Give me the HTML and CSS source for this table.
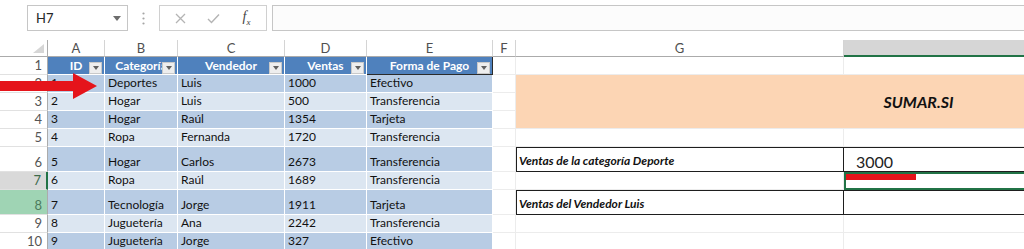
FILE: index.html
```html
<!DOCTYPE html>
<html lang="es">
<head>
<meta charset="utf-8">
<title>SUMAR.SI</title>
<link rel="stylesheet" href="styles.css">
</head>
<body>
<div class="app">
  <div class="formula-bar">
    <div class="name-box"><span>H7</span><svg class="caret" width="8" height="5" viewBox="0 0 8 5"><path d="M0 0H8L4 5Z" fill="#6d6d6d"/></svg></div>
    <div class="dots"><svg width="3" height="13" viewBox="0 0 3 13"><circle cx="1.5" cy="1.5" r="1.1" fill="#a5a5a5"/><circle cx="1.5" cy="6.5" r="1.1" fill="#a5a5a5"/><circle cx="1.5" cy="11.5" r="1.1" fill="#a5a5a5"/></svg></div>
    <div class="fn-box">
      <span class="slot"><svg width="11" height="11" viewBox="0 0 11 11"><path d="M1 1L10 10M10 1L1 10" stroke="#b4b4b4" stroke-width="1.3" fill="none"/></svg></span>
      <span class="slot"><svg width="13" height="11" viewBox="0 0 13 11"><path d="M1 6L4.5 9.5L12 1.5" stroke="#b4b4b4" stroke-width="1.4" fill="none"/></svg></span>
      <span class="slot fx"><i>f<sub>x</sub></i></span>
    </div>
    <div class="formula-input"></div>
  </div>

  <div class="sheet">
    <!-- column headers -->
    <div class="c corner"><svg width="11" height="9" viewBox="0 0 11 9"><path d="M11 0V9H0Z" fill="#d6d6d6"/></svg></div>
    <div class="c ch">A</div><div class="c ch">B</div><div class="c ch">C</div><div class="c ch">D</div><div class="c ch">E</div><div class="c ch">F</div><div class="c ch">G</div><div class="c ch ch-active"></div>

    <!-- row 1 -->
    <div class="c rh">1</div>
    <div class="c th">ID<i class="fb"></i></div>
    <div class="c th">Categoría<i class="fb"></i></div>
    <div class="c th">Vendedor<i class="fb"></i></div>
    <div class="c th">Ventas<i class="fb"></i></div>
    <div class="c th th-end">Forma de Pago<i class="fb"></i></div>
    <div class="c e"></div><div class="c e"></div><div class="c e"></div>

    <!-- row 2 -->
    <div class="c rh">2</div>
    <div class="c d d1">1</div><div class="c d d1">Deportes</div><div class="c d d1">Luis</div><div class="c d d1">1000</div><div class="c d d1">Efectivo</div>
    <div class="c e"></div>
    <div class="c merge">SUMAR.SI</div>

    <!-- row 3 -->
    <div class="c rh">3</div>
    <div class="c d d2">2</div><div class="c d d2">Hogar</div><div class="c d d2">Luis</div><div class="c d d2">500</div><div class="c d d2">Transferencia</div>
    <div class="c e"></div>

    <!-- row 4 -->
    <div class="c rh">4</div>
    <div class="c d d1">3</div><div class="c d d1">Hogar</div><div class="c d d1">Raúl</div><div class="c d d1">1354</div><div class="c d d1">Tarjeta</div>
    <div class="c e"></div>

    <!-- row 5 -->
    <div class="c rh">5</div>
    <div class="c d d2">4</div><div class="c d d2">Ropa</div><div class="c d d2">Fernanda</div><div class="c d d2">1720</div><div class="c d d2">Transferencia</div>
    <div class="c e"></div><div class="c e"></div><div class="c e"></div>

    <!-- row 6 -->
    <div class="c rh">6</div>
    <div class="c d d1">5</div><div class="c d d1">Hogar</div><div class="c d d1">Carlos</div><div class="c d d1">2673</div><div class="c d d1">Transferencia</div>
    <div class="c e"></div>
    <div class="c lbl">Ventas de la categoría Deporte</div>
    <div class="c val">3000</div>

    <!-- row 7 -->
    <div class="c rh rh-active">7</div>
    <div class="c d d2">6</div><div class="c d d2">Ropa</div><div class="c d d2">Raúl</div><div class="c d d2">1689</div><div class="c d d2">Transferencia</div>
    <div class="c e"></div><div class="c e"></div>
    <div class="c e sel"><span class="mark"></span></div>

    <!-- row 8 -->
    <div class="c rh rh-green">8</div>
    <div class="c d d1">7</div><div class="c d d1">Tecnología</div><div class="c d d1">Jorge</div><div class="c d d1">1911</div><div class="c d d1">Tarjeta</div>
    <div class="c e"></div>
    <div class="c lbl">Ventas del Vendedor Luis</div>
    <div class="c val"></div>

    <!-- row 9 -->
    <div class="c rh">9</div>
    <div class="c d d2">8</div><div class="c d d2">Juguetería</div><div class="c d d2">Ana</div><div class="c d d2">2242</div><div class="c d d2">Transferencia</div>
    <div class="c e"></div><div class="c e"></div><div class="c e"></div>

    <!-- row 10 -->
    <div class="c rh">10</div>
    <div class="c d d1">9</div><div class="c d d1">Juguetería</div><div class="c d d1">Jorge</div><div class="c d d1">327</div><div class="c d d1">Efectivo</div>
    <div class="c e"></div><div class="c e"></div><div class="c e"></div>
  </div>

  <svg class="arrow" width="98" height="26" viewBox="0 0 98 26"><path d="M0 8H73V0L97 13L73 26V18H0Z" fill="#e5141b"/></svg>
</div>
</body>
</html>
```

FILE: styles.css
```css
html, body {
  margin: 0;
  padding: 0;
  background: #ffffff;
  overflow: hidden;
}

body {
  width: 1024px;
  height: 249px;
  font-family: Lato, "Noto Sans", "Liberation Sans", sans-serif;
  color: #000;
}

.app {
  position: relative;
  height: 249px;
  overflow: hidden;
}

/* ---------- formula bar ---------- */
.formula-bar {
  display: flex;
  height: 26px;
  padding-top: 5px;
  padding-left: 27px;
}

.name-box {
  width: 101px;
  box-sizing: border-box;
  border: 1px solid #c6c6c6;
  display: flex;
  align-items: center;
  justify-content: space-between;
  padding: 0 6px 0 8px;
  font-size: 13px;
  color: #262626;
}

.dots {
  width: 31px;
  display: flex;
  align-items: center;
  justify-content: center;
}

.fn-box {
  width: 108px;
  box-sizing: border-box;
  border: 1px solid #d0d0d0;
  display: flex;
  align-items: center;
  padding-left: 4px;
}

.slot {
  width: 33px;
  display: flex;
  align-items: center;
  justify-content: center;
}

.fx {
  font-family: "Liberation Serif", "DejaVu Serif", serif;
  font-size: 14px;
  color: #444;
}

.fx sub {
  font-size: 9px;
}

.formula-input {
  flex: 1;
  margin-left: 5px;
  border-top: 1px solid #c6c6c6;
  border-bottom: 1px solid #c6c6c6;
  border-left: 1px solid #c6c6c6;
  background: #fcfcfc;
}

/* ---------- sheet grid ---------- */
.sheet {
  margin-top: 9px;
  display: grid;
  width: 1321px;
  grid-template-columns: 48px 57px 73px 107px 82px 126px 23px 328px 477px;
  grid-template-rows: 17px 18px 18px 18px 18px 18px 25px 18px 25px 18px 18px;
}

.c {
  box-sizing: border-box;
  border-right: 1px solid #ececec;
  border-bottom: 1px solid #ececec;
  overflow: hidden;
  white-space: nowrap;
}

.corner {
  border-right: 1px solid #ababab;
  border-bottom: 1px solid #ababab;
  display: flex;
  align-items: flex-end;
  justify-content: flex-end;
  padding: 0 3px 3px 0;
}

.ch {
  border-right: 1px solid #d4d4d4;
  border-bottom: 1px solid #ababab;
  text-align: center;
  font-size: 13px;
  line-height: 16px;
  color: #505050;
}

.ch-active {
  background: #d6d6d6;
  border-bottom: 2px solid #217346;
}

.rh {
  border-right: 1px solid #ababab;
  border-bottom: 1px solid #e1e1e1;
  display: flex;
  align-items: flex-end;
  justify-content: flex-end;
  padding: 0 5px 1px 0;
  font-size: 13px;
  line-height: 16px;
  color: #555;
}

.rh-active {
  background: #d9d9d9;
  border-right: 2px solid #217346;
  color: #3d6b4d;
}

.rh-green {
  background: #9fd4b4;
  color: #4c7a5d;
}

/* table header: text centred across the cell, filter button laid over it */
.th {
  position: relative;
  background: #4f81bd;
  border-right: 1px solid #ffffff;
  border-bottom: 1px solid #ffffff;
  text-align: center;
  font-size: 12px;
  line-height: 17px;
  font-weight: 700;
  color: #ffffff;
}

.th-end {
  border-right: 1px solid #2b2b2b;
  border-bottom: 1px solid #2b2b2b;
}

.fb {
  position: absolute;
  right: 2px;
  top: 5px;
  width: 13px;
  height: 12px;
  box-sizing: border-box;
  background: #eeeeee;
  border: 1px solid #c9c9c9;
  display: flex;
  align-items: center;
  justify-content: center;
}

.fb::after {
  content: "";
  border-left: 3.5px solid transparent;
  border-right: 3.5px solid transparent;
  border-top: 4px solid #606060;
}

/* data cells */
.d {
  border-right: 1px solid #ffffff;
  border-bottom: 1px solid #ffffff;
  display: flex;
  align-items: flex-end;
  padding: 0 3px 2px 3px;
  font-size: 12px;
  line-height: 14px;
  color: #111;
}

.d1 {
  background: #b8cce4;
}

.d2 {
  background: #dce6f1;
}

/* right side */
.merge {
  grid-column: span 2;
  grid-row: span 3;
  background: #fcd5b4;
  border-right: none;
  display: flex;
  align-items: center;
  justify-content: center;
  font-size: 16px;
  font-weight: 700;
  font-style: italic;
  color: #111;
}

.lbl {
  border: 1px solid #1e1e1e;
  display: flex;
  align-items: flex-end;
  padding: 0 2px 3px 2px;
  font-size: 12px;
  line-height: 14px;
  font-weight: 700;
  font-style: italic;
  color: #111;
}

.val {
  border-top: 1px solid #1e1e1e;
  border-right: 1px solid #1e1e1e;
  border-bottom: 1px solid #1e1e1e;
  display: flex;
  align-items: flex-end;
  padding: 0 0 0 12px;
  font-size: 16px;
  line-height: 19px;
  color: #222;
}

.sel {
  position: relative;
  border: 2px solid #217346;
}

.mark {
  position: absolute;
  top: 0;
  left: -1px;
  width: 71px;
  height: 6px;
  background: #e5141b;
}

.arrow {
  position: absolute;
  left: 0;
  top: 73px;
}
```
